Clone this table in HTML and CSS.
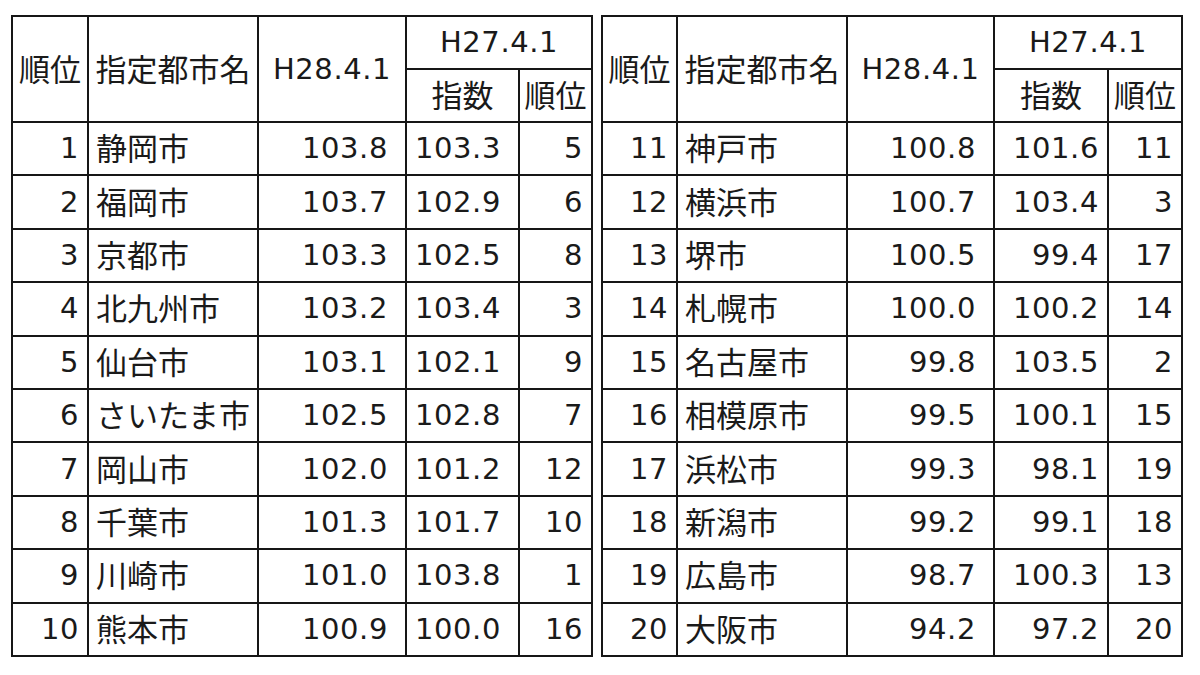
FILE: index.html
```html
<!DOCTYPE html>
<html lang="ja">
<head>
<meta charset="utf-8">
<title>指定都市 順位</title>
<link rel="stylesheet" href="styles.css">
</head>
<body>
<div class="wrap">
  <table class="rank rank-a">
    <colgroup><col class="c1"><col class="c2"><col class="c3"><col class="c4"><col class="c5"></colgroup>
    <thead>
      <tr class="h1">
        <th rowspan="2" class="jp">順位</th>
        <th rowspan="2" class="jp">指定都市名</th>
        <th rowspan="2">H28.4.1</th>
        <th colspan="2" class="top">H27.4.1</th>
      </tr>
      <tr class="h2">
        <th class="jp">指数</th>
        <th class="jp">順位</th>
      </tr>
    </thead>
    <tbody>
      <tr><td class="r">1</td><td class="n">静岡市</td><td class="v">103.8</td><td class="i">103.3</td><td class="k">5</td></tr>
      <tr><td class="r">2</td><td class="n">福岡市</td><td class="v">103.7</td><td class="i">102.9</td><td class="k">6</td></tr>
      <tr><td class="r">3</td><td class="n">京都市</td><td class="v">103.3</td><td class="i">102.5</td><td class="k">8</td></tr>
      <tr><td class="r">4</td><td class="n">北九州市</td><td class="v">103.2</td><td class="i">103.4</td><td class="k">3</td></tr>
      <tr><td class="r">5</td><td class="n">仙台市</td><td class="v">103.1</td><td class="i">102.1</td><td class="k">9</td></tr>
      <tr><td class="r">6</td><td class="n">さいたま市</td><td class="v">102.5</td><td class="i">102.8</td><td class="k">7</td></tr>
      <tr><td class="r">7</td><td class="n">岡山市</td><td class="v">102.0</td><td class="i">101.2</td><td class="k">12</td></tr>
      <tr><td class="r">8</td><td class="n">千葉市</td><td class="v">101.3</td><td class="i">101.7</td><td class="k">10</td></tr>
      <tr><td class="r">9</td><td class="n">川崎市</td><td class="v">101.0</td><td class="i">103.8</td><td class="k">1</td></tr>
      <tr><td class="r">10</td><td class="n">熊本市</td><td class="v">100.9</td><td class="i">100.0</td><td class="k">16</td></tr>
    </tbody>
  </table>
  <table class="rank rank-b">
    <colgroup><col class="c1"><col class="c2"><col class="c3"><col class="c4"><col class="c5"></colgroup>
    <thead>
      <tr class="h1">
        <th rowspan="2" class="jp">順位</th>
        <th rowspan="2" class="jp">指定都市名</th>
        <th rowspan="2">H28.4.1</th>
        <th colspan="2" class="top">H27.4.1</th>
      </tr>
      <tr class="h2">
        <th class="jp">指数</th>
        <th class="jp">順位</th>
      </tr>
    </thead>
    <tbody>
      <tr><td class="r">11</td><td class="n">神戸市</td><td class="v">100.8</td><td class="i">101.6</td><td class="k">11</td></tr>
      <tr><td class="r">12</td><td class="n">横浜市</td><td class="v">100.7</td><td class="i">103.4</td><td class="k">3</td></tr>
      <tr><td class="r">13</td><td class="n">堺市</td><td class="v">100.5</td><td class="i">99.4</td><td class="k">17</td></tr>
      <tr><td class="r">14</td><td class="n">札幌市</td><td class="v">100.0</td><td class="i">100.2</td><td class="k">14</td></tr>
      <tr><td class="r">15</td><td class="n">名古屋市</td><td class="v">99.8</td><td class="i">103.5</td><td class="k">2</td></tr>
      <tr><td class="r">16</td><td class="n">相模原市</td><td class="v">99.5</td><td class="i">100.1</td><td class="k">15</td></tr>
      <tr><td class="r">17</td><td class="n">浜松市</td><td class="v">99.3</td><td class="i">98.1</td><td class="k">19</td></tr>
      <tr><td class="r">18</td><td class="n">新潟市</td><td class="v">99.2</td><td class="i">99.1</td><td class="k">18</td></tr>
      <tr><td class="r">19</td><td class="n">広島市</td><td class="v">98.7</td><td class="i">100.3</td><td class="k">13</td></tr>
      <tr><td class="r">20</td><td class="n">大阪市</td><td class="v">94.2</td><td class="i">97.2</td><td class="k">20</td></tr>
    </tbody>
  </table>
</div>
</body>
</html>
```

FILE: styles.css
```css
html, body {
  margin: 0;
  padding: 0;
  background: #ffffff;
}

.wrap {
  display: flex;
  gap: 8px;
  padding: 15px 0 0 11px;
  font-family: "DejaVu Sans", "Noto Sans CJK JP", sans-serif;
  font-size: 29px;
  letter-spacing: 0.6px;
  color: #1a1a1a;
}

.rank {
  border-collapse: collapse;
  table-layout: fixed;
  width: 580px;
  border: 2px solid #161616;
}

.rank th,
.rank td {
  border: 2px solid #161616;
  padding: 0;
  height: 51.4px;
  line-height: 1;
  white-space: nowrap;
  overflow: hidden;
  font-weight: normal;
}

.rank-a .c1 { width: 76px; }
.rank-a .c2 { width: 170px; }
.rank-a .c3 { width: 148px; }
.rank-a .c4 { width: 113px; }
.rank-a .c5 { width: 73px; }

.rank-b .c1 { width: 75px; }
.rank-b .c2 { width: 170px; }
.rank-b .c3 { width: 147px; }
.rank-b .c4 { width: 114px; }
.rank-b .c5 { width: 74px; }

.rank th {
  text-align: center;
  vertical-align: middle;
}

.rank .h1 th.top {
  height: 51px;
}

.rank .h2 th {
  height: 47px;
}

.rank .jp,
.rank .n {
  font-family: "Noto Sans CJK JP", sans-serif;
  font-size: 31px;
  letter-spacing: 0;
  padding-bottom: 4px;
}

.rank td.n {
  height: 47.4px;
}

.rank .r {
  text-align: right;
  padding-right: 8px;
}

.rank .n {
  text-align: left;
  padding-left: 7px;
}

.rank .v {
  text-align: right;
  padding-right: 17px;
}

.rank-a .i {
  text-align: right;
  padding-right: 17px;
}

.rank-b .i {
  text-align: right;
  padding-right: 8px;
}

.rank .k {
  text-align: right;
  padding-right: 8px;
}
```
